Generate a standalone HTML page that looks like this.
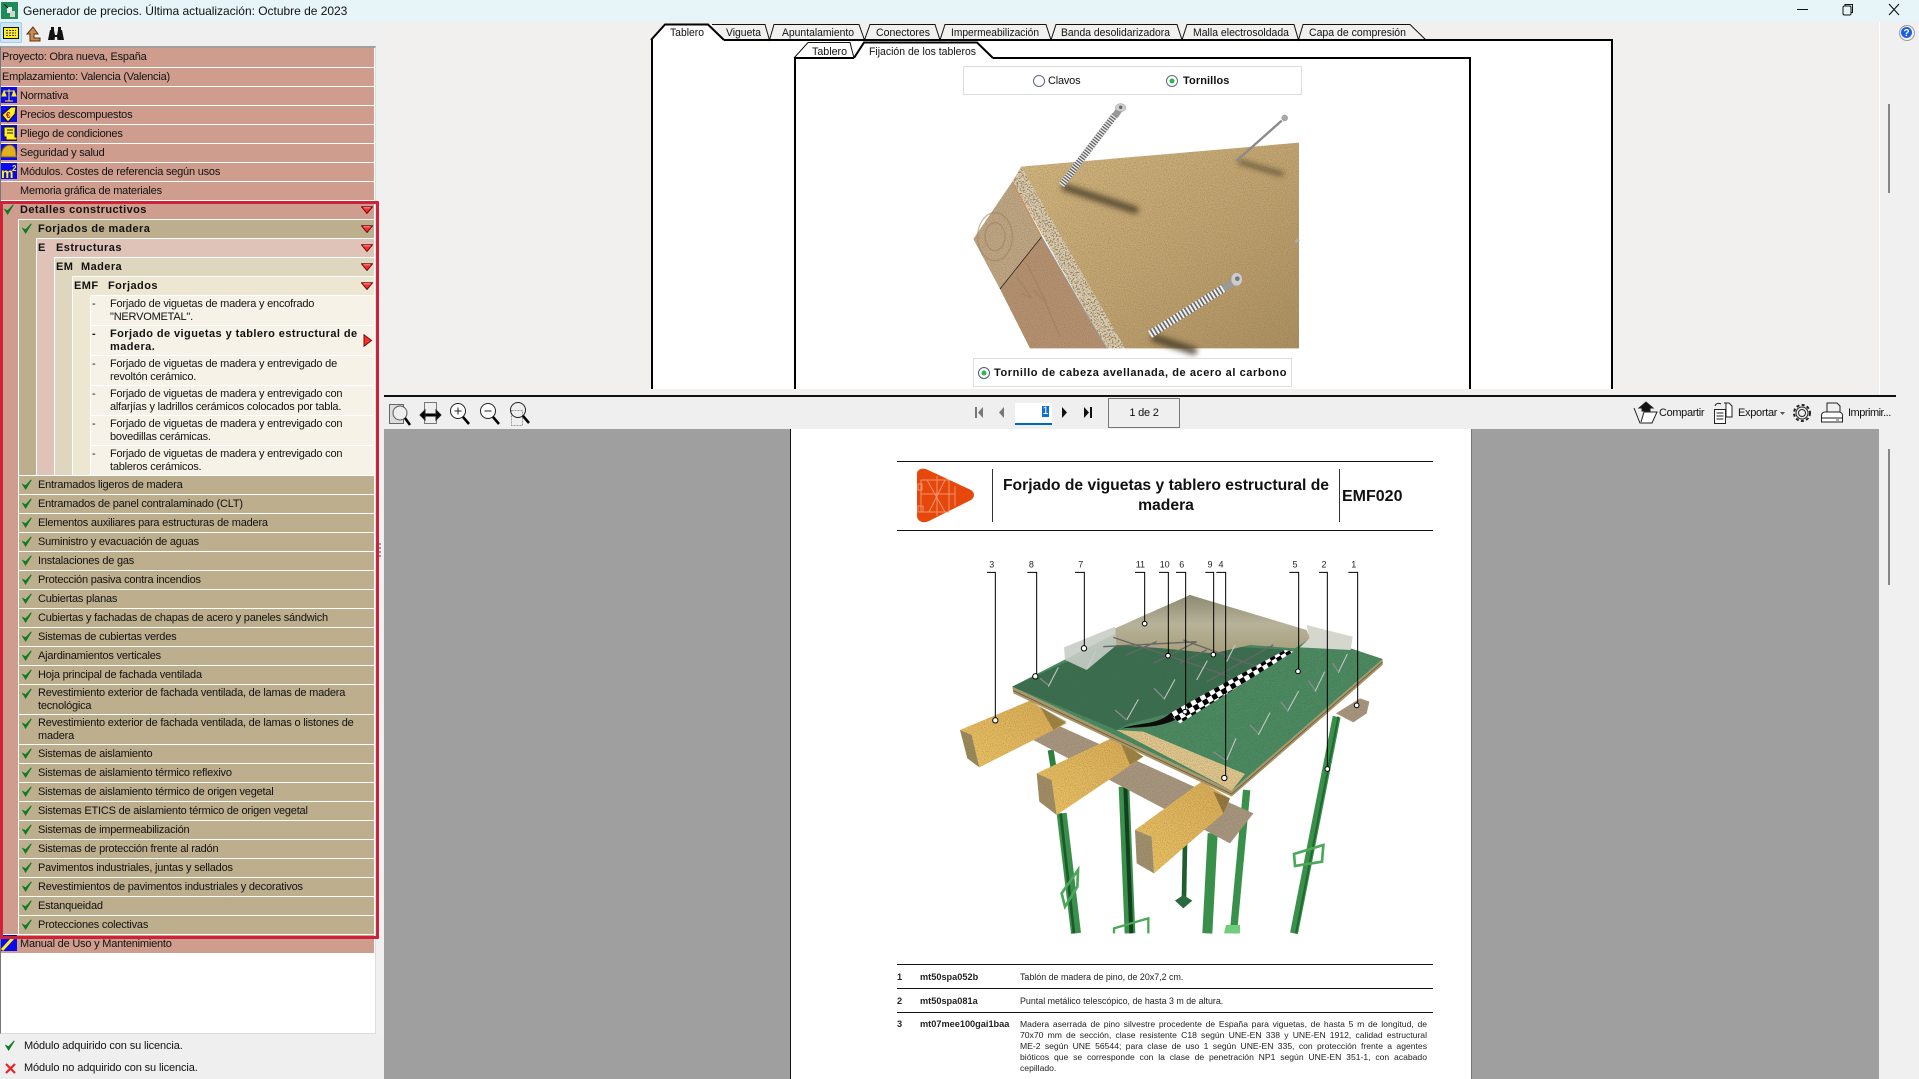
<!DOCTYPE html>
<html lang="es"><head><meta charset="utf-8"><title>Generador de precios</title>
<style>
html,body{margin:0;padding:0;background:#f0f0f0}
body{width:1919px;height:1079px;position:relative;overflow:hidden;font:11px/13px "Liberation Sans",sans-serif;color:#111;letter-spacing:-.21px}
div,svg,span{position:absolute;box-sizing:border-box}
.r{left:1px;width:373px;height:18px;line-height:18px;white-space:nowrap}
.p{background:#cf9d8d}.t{background:#bdae8d;left:19px;width:355px}
.b{font-weight:bold;letter-spacing:.43px}
.i{left:91px;width:283px;height:29px;background:#f6f2e7;white-space:normal}
.i span{left:19px;top:2px;width:256px;line-height:13px}
.i.b span{width:252px}
.i i{position:absolute;left:1px;top:2px;font-style:normal;line-height:13px}
.t span{left:19px;top:0;white-space:nowrap}
.t.two{height:29px}.t.two span{top:2px;line-height:13px;width:330px;white-space:normal}
.t svg{left:3px;top:3px}
.tx{font-family:"Liberation Sans",sans-serif;font-size:11px;fill:#111;letter-spacing:0}
.pd{font-size:8.9px;line-height:11px;color:#222;letter-spacing:0}
.pd.b{font-size:9.2px}
.ln{position:static;display:block;font-size:8.6px;height:11px;white-space:nowrap;text-align:justify;text-align-last:justify}
</style></head><body>
<svg width="0" height="0" style="position:absolute"><defs>
<symbol id="c" viewBox="0 0 10 11"><path d="M.8 5.500 3.600 10 9.300.8 3.700 6.800z" fill="#0b7d23" stroke="#0b7d23" stroke-width="1"/></symbol>
<symbol id="d" viewBox="0 0 12 8"><path d="M.5.8H11.500L6 7.500z" fill="#ff2a2a" stroke="#6b1010" stroke-width="1"/><path d="M2.500 1.800H9.500" stroke="#ff9a9a"/></symbol>
<filter id="g" x="0" y="0" width="100%" height="100%"><feTurbulence type="fractalNoise" baseFrequency=".35" numOctaves="2" seed="3"/><feColorMatrix values="0 0 0 0 .25 0 0 0 0 .18 0 0 0 0 .08 0 0 0 1.300 -.45"/><feComposite in2="SourceGraphic" operator="in" result="n"/><feMerge><feMergeNode in="SourceGraphic"/><feMergeNode in="n"/></feMerge></filter>
<filter id="sp" x="0" y="0" width="100%" height="100%"><feTurbulence type="fractalNoise" baseFrequency=".22" numOctaves="2" seed="5"/><feColorMatrix values="0 0 0 0 .3 0 0 0 0 .2 0 0 0 0 .1 0 0 0 6 -2.900"/><feComposite in2="SourceGraphic" operator="in" result="n"/><feMerge><feMergeNode in="SourceGraphic"/><feMergeNode in="n"/></feMerge></filter>
<filter id="f" x="0" y="0" width="100%" height="100%"><feTurbulence type="fractalNoise" baseFrequency=".8" numOctaves="2" seed="8"/><feColorMatrix values="0 0 0 0 .05 0 0 0 0 .12 0 0 0 0 .08 0 0 0 1.600 -.6"/><feComposite in2="SourceGraphic" operator="in" result="n"/><feMerge><feMergeNode in="SourceGraphic"/><feMergeNode in="n"/></feMerge></filter>
<filter id="bl" x="-30%" y="-60%" width="160%" height="220%"><feGaussianBlur stdDeviation="9"/></filter>
<linearGradient id="bd" x1="0" y1="0" x2="1" y2="1"><stop offset="0" stop-color="#d8bb84"/><stop offset=".55" stop-color="#c4a672"/><stop offset="1" stop-color="#ae9162"/></linearGradient>
<linearGradient id="sc" x1="0" y1="0" x2="1" y2="0"><stop offset="0" stop-color="#f0f0f0"/><stop offset="1" stop-color="#9a9a9a"/></linearGradient>
<linearGradient id="ins" x1="0" y1="0" x2="0" y2="1"><stop offset="0" stop-color="#8d8a72"/><stop offset=".5" stop-color="#b7b29a"/><stop offset="1" stop-color="#a79f7a"/></linearGradient>
<linearGradient id="jo" x1="0" y1="1" x2="1" y2="0"><stop offset="0" stop-color="#f4c965"/><stop offset="1" stop-color="#dcae55"/></linearGradient>
<pattern id="ck" width="32" height="32" patternUnits="userSpaceOnUse" patternTransform="rotate(-30)"><rect width="32" height="32" fill="#fff"/><rect width="16" height="16" fill="#000"/><rect x="16" y="16" width="16" height="16" fill="#000"/></pattern>
</defs></svg>

<!-- title bar -->
<div style="left:0;top:0;width:1919px;height:22px;background:#e7f5f9"></div>
<svg style="left:1px;top:2px" width="17" height="17"><rect width="17" height="17" fill="#1f8a5a"/><rect x="6" y="5" width="5" height="6" fill="#e8f0e8"/><rect x="9" y="9" width="5" height="6" fill="#cfd8d0"/><path d="M3 2 7 6" stroke="#111"/></svg>
<div style="left:23px;top:3px;font-size:12px;line-height:16px;white-space:nowrap;letter-spacing:-.02px">Generador de precios. Última actualización: Octubre de 2023</div>
<svg style="left:1797px;top:3px" width="110" height="14" fill="none" stroke="#111"><path d="M0 6.500H11"/><rect x="46" y="3" width="8" height="9" rx="1.500"/><path d="M48 3V1.500H55.500V9.500H54"/><path d="M92 1 102 12M102 1 92 12" stroke-width="1.100"/></svg>

<!-- top-left toolbar -->
<div style="left:0;top:22px;width:22px;height:21px;background:#cde6f7;border:1px solid #9fd0ee;border-radius:2px"></div>
<svg style="left:3px;top:26px" width="62" height="16"><rect x=".5" y="1.500" width="15" height="11" fill="#ffee22" stroke="#111"/><path d="M3 4.500H13M3 7H13M3 9.500H13" stroke="#333" stroke-dasharray="2 1"/><path d="M30 1 24 8H27V15H37V12H31V8H35z" fill="#c98b4e" stroke="#5a3315"/><path d="M45 14 47 4H51L52 9H54L55 4H59L61 14H54.500L54 11H52L51.500 14z" fill="#111"/><rect x="48" y="1" width="3" height="4" fill="#111"/><rect x="55" y="1" width="3" height="4" fill="#111"/></svg>

<!-- left panel -->
<div style="left:0;top:46px;width:376px;height:988px;background:#fff;border-top:2px solid #a0a0a0;border-left:1px solid #777;border-right:1px solid #ddd;border-bottom:1px solid #ddd"></div>
<div class="r p" style="top:48px;height:19px;padding-left:1px;line-height:19px">Proyecto: Obra nueva, España</div>
<div class="r p" style="top:68px"><span style="left:1px">Emplazamiento: Valencia (Valencia)</span></div>
<div class="r p" style="top:87px"><span style="left:19px">Normativa</span></div>
<div class="r p" style="top:106px"><span style="left:19px">Precios descompuestos</span></div>
<div class="r p" style="top:125px"><span style="left:19px">Pliego de condiciones</span></div>
<div class="r p" style="top:144px"><span style="left:19px">Seguridad y salud</span></div>
<div class="r p" style="top:163px"><span style="left:19px">Módulos. Costes de referencia según usos</span></div>
<div class="r p" style="top:182px"><span style="left:19px">Memoria gráfica de materiales</span></div>
<svg style="left:1px;top:87px" width="16" height="94">
<rect width="16" height="16" fill="#0a0af0"/><path d="M8 2V14M3 4H13M1 9 3 4 5 9zM11 9 13 4 15 9zM4 14H12" stroke="#ffee22" fill="#ffee22"/>
<rect y="19" width="16" height="16" fill="#0a0af0"/><path d="M1 28 10 20 15 20 14 27 7 35z" fill="#ffee22" stroke="#111"/><text x="5" y="31" font-size="8" font-weight="bold" fill="#c00" font-family="Liberation Sans">€</text>
<rect y="38" width="16" height="16" fill="#0a0af0"/><path d="M3 40H14V50H16V53H5V50H3z" fill="#ffee22" stroke="#111"/><path d="M6 43H12M6 46H12" stroke="#111"/>
<rect y="57" width="16" height="16" fill="#0a0af0"/><path d="M0 70C0 60 6 58 9 58 13 58 15 62 15 68L16 70z" fill="#e0b020" stroke="#7a5a10"/>
<rect y="76" width="16" height="16" fill="#0a0af0"/><text x="0" y="91" font-size="14" font-weight="bold" fill="#ffee22" font-family="Liberation Sans">m</text><text x="11" y="84" font-size="8" font-weight="bold" fill="#ffee22" font-family="Liberation Sans">2</text>
</svg>

<!-- nested columns -->
<div style="left:1px;top:201px;width:17px;height:733px;background:#cf9d8d"></div>
<div style="left:19px;top:220px;width:17px;height:255px;background:#bdae8d"></div>
<div style="left:37px;top:239px;width:17px;height:236px;background:#dfc3b9"></div>
<div style="left:55px;top:258px;width:17px;height:217px;background:#ded6bf"></div>
<div style="left:73px;top:277px;width:17px;height:198px;background:#ede6d1"></div>

<div class="r p b" style="top:201px"><svg style="left:3px;top:3px" width="10" height="11"><use href="#c"/></svg><span style="left:19px">Detalles constructivos</span></div>
<div class="r t b" style="top:220px;background:#bdae8d"><svg width="10" height="11"><use href="#c"/></svg><span>Forjados de madera</span></div>
<div class="r b" style="top:239px;left:37px;width:337px;background:#dfc3b9"><span style="left:1px">E</span><span style="left:19px">Estructuras</span></div>
<div class="r b" style="top:258px;left:55px;width:319px;background:#ded6bf"><span style="left:1px">EM</span><span style="left:26px">Madera</span></div>
<div class="r b" style="top:277px;left:73px;width:301px;background:#ede6d1"><span style="left:1px">EMF</span><span style="left:35px">Forjados</span></div>
<svg style="left:361px;top:206px" width="12" height="8"><use href="#d"/></svg>
<svg style="left:361px;top:225px" width="12" height="8"><use href="#d"/></svg>
<svg style="left:361px;top:244px" width="12" height="8"><use href="#d"/></svg>
<svg style="left:361px;top:263px" width="12" height="8"><use href="#d"/></svg>
<svg style="left:361px;top:282px" width="12" height="8"><use href="#d"/></svg>

<div class="r i" style="top:296px"><i>-</i><span>Forjado de viguetas de madera y encofrado "NERVOMETAL".</span></div>
<div class="r i b" style="top:326px"><i>-</i><span>Forjado de viguetas y tablero estructural de madera.</span></div>
<svg style="left:363px;top:334px" width="10" height="13"><path d="M1 .8 8.500 6.500 1 12.200z" fill="#ff2a2a" stroke="#6b1010"/></svg>
<div class="r i" style="top:356px"><i>-</i><span>Forjado de viguetas de madera y entrevigado de revoltón cerámico.</span></div>
<div class="r i" style="top:386px"><i>-</i><span>Forjado de viguetas de madera y entrevigado con alfarjías y ladrillos cerámicos colocados por tabla.</span></div>
<div class="r i" style="top:416px"><i>-</i><span>Forjado de viguetas de madera y entrevigado con bovedillas cerámicas.</span></div>
<div class="r i" style="top:446px"><i>-</i><span>Forjado de viguetas de madera y entrevigado con tableros cerámicos.</span></div>

<div class="r t" style="top:476px"><svg width="10" height="11"><use href="#c"/></svg><span>Entramados ligeros de madera</span></div>
<div class="r t" style="top:495px"><svg width="10" height="11"><use href="#c"/></svg><span>Entramados de panel contralaminado (CLT)</span></div>
<div class="r t" style="top:514px"><svg width="10" height="11"><use href="#c"/></svg><span>Elementos auxiliares para estructuras de madera</span></div>
<div class="r t" style="top:533px"><svg width="10" height="11"><use href="#c"/></svg><span>Suministro y evacuación de aguas</span></div>
<div class="r t" style="top:552px"><svg width="10" height="11"><use href="#c"/></svg><span>Instalaciones de gas</span></div>
<div class="r t" style="top:571px"><svg width="10" height="11"><use href="#c"/></svg><span>Protección pasiva contra incendios</span></div>
<div class="r t" style="top:590px"><svg width="10" height="11"><use href="#c"/></svg><span>Cubiertas planas</span></div>
<div class="r t" style="top:609px"><svg width="10" height="11"><use href="#c"/></svg><span>Cubiertas y fachadas de chapas de acero y paneles sándwich</span></div>
<div class="r t" style="top:628px"><svg width="10" height="11"><use href="#c"/></svg><span>Sistemas de cubiertas verdes</span></div>
<div class="r t" style="top:647px"><svg width="10" height="11"><use href="#c"/></svg><span>Ajardinamientos verticales</span></div>
<div class="r t" style="top:666px"><svg width="10" height="11"><use href="#c"/></svg><span>Hoja principal de fachada ventilada</span></div>
<div class="r t two" style="top:685px"><svg width="10" height="11"><use href="#c"/></svg><span>Revestimiento exterior de fachada ventilada, de lamas de madera tecnológica</span></div>
<div class="r t two" style="top:715px"><svg width="10" height="11"><use href="#c"/></svg><span>Revestimiento exterior de fachada ventilada, de lamas o listones de madera</span></div>
<div class="r t" style="top:745px"><svg width="10" height="11"><use href="#c"/></svg><span>Sistemas de aislamiento</span></div>
<div class="r t" style="top:764px"><svg width="10" height="11"><use href="#c"/></svg><span>Sistemas de aislamiento térmico reflexivo</span></div>
<div class="r t" style="top:783px"><svg width="10" height="11"><use href="#c"/></svg><span>Sistemas de aislamiento térmico de origen vegetal</span></div>
<div class="r t" style="top:802px"><svg width="10" height="11"><use href="#c"/></svg><span>Sistemas ETICS de aislamiento térmico de origen vegetal</span></div>
<div class="r t" style="top:821px"><svg width="10" height="11"><use href="#c"/></svg><span>Sistemas de impermeabilización</span></div>
<div class="r t" style="top:840px"><svg width="10" height="11"><use href="#c"/></svg><span>Sistemas de protección frente al radón</span></div>
<div class="r t" style="top:859px"><svg width="10" height="11"><use href="#c"/></svg><span>Pavimentos industriales, juntas y sellados</span></div>
<div class="r t" style="top:878px"><svg width="10" height="11"><use href="#c"/></svg><span>Revestimientos de pavimentos industriales y decorativos</span></div>
<div class="r t" style="top:897px"><svg width="10" height="11"><use href="#c"/></svg><span>Estanqueidad</span></div>
<div class="r t" style="top:916px"><svg width="10" height="11"><use href="#c"/></svg><span>Protecciones colectivas</span></div>
<div class="r p" style="top:935px"><span style="left:19px">Manual de Uso y Mantenimiento</span></div>
<svg style="left:1px;top:935px" width="16" height="16"><rect width="16" height="16" fill="#0a0af0"/><path d="M1 15 12 3" stroke="#ffee22" stroke-width="3"/><path d="M10 0 15 0 13 3" fill="#111"/></svg>

<!-- red highlight -->
<div style="left:0;top:201px;width:379px;height:738px;border:3px solid #cf2239;border-radius:1px"></div>
<div style="left:379px;top:543px;width:2px;height:14px;background:repeating-linear-gradient(#9a9a9a 0 2px,transparent 2px 4px)"></div>

<!-- legend -->
<div style="left:0;top:1034px;width:384px;height:45px;background:#efefef"></div>
<svg style="left:5px;top:1040px" width="10" height="11"><use href="#c"/></svg>
<svg style="left:5px;top:1063px" width="11" height="11"><path d="M1 1 10 10M10 1 1 10" stroke="#e8202a" stroke-width="2.200"/></svg>
<div style="left:24px;top:1040px;line-height:13px;white-space:nowrap;letter-spacing:-.12px">Módulo adquirido con su licencia.</div>
<div style="left:24px;top:1062px;line-height:13px;white-space:nowrap;letter-spacing:-.12px">Módulo no adquirido con su licencia.</div>

<!-- top detail pane -->
<div style="left:384px;top:22px;width:1495px;height:374px;background:#f1f0ef"></div>
<div style="left:1879px;top:22px;width:1px;height:374px;background:#fff"></div>
<div style="left:651px;top:40px;width:962px;height:349px;background:#fff"></div>
<svg style="left:640px;top:20px" width="990" height="40">
<path d="M72 4.500H125L129.500 20 134 4.500H219L224.500 20 230 4.500H295L300 20 305 4.500H406L411 20 416 4.500H537L542 20 547 4.500H654L658.500 20 663 4.500H770L786 20" fill="none" stroke="#111"/>
<path d="M11 20 25 4.500H68L84 20" fill="#fff" stroke="#000" stroke-width="2"/>
</svg>
<div style="left:651px;top:39px;width:2px;height:350px;background:#000"></div>
<div style="left:1611px;top:39px;width:2px;height:350px;background:#000"></div>
<div style="left:724px;top:39px;width:889px;height:2px;background:#000"></div>
<svg style="left:780px;top:38px" width="240" height="24" fill="none">
<path d="M14 20 28 4.500H70L74 20" fill="#fff" stroke="#111"/>
<path d="M74 20 84 4.500H197L213 20" fill="#fff" stroke="#000" stroke-width="2"/>
</svg>
<div style="left:794px;top:57px;width:2px;height:332px;background:#000"></div>
<div style="left:1469px;top:57px;width:2px;height:332px;background:#000"></div>
<div style="left:794px;top:57px;width:60px;height:2px;background:#000"></div>
<div style="left:993px;top:57px;width:478px;height:2px;background:#000"></div>
<svg style="left:640px;top:20px" width="800" height="40" class="tx">
<text class="tx" x="30" y="16" textLength="34" lengthAdjust="spacingAndGlyphs">Tablero</text>
<text class="tx" x="86" y="16" textLength="35" lengthAdjust="spacingAndGlyphs">Vigueta</text>
<text class="tx" x="142" y="16" textLength="72" lengthAdjust="spacingAndGlyphs">Apuntalamiento</text>
<text class="tx" x="236" y="16" textLength="54" lengthAdjust="spacingAndGlyphs">Conectores</text>
<text class="tx" x="311" y="16" textLength="88" lengthAdjust="spacingAndGlyphs">Impermeabilización</text>
<text class="tx" x="421" y="16" textLength="109" lengthAdjust="spacingAndGlyphs">Banda desolidarizadora</text>
<text class="tx" x="553" y="16" textLength="96" lengthAdjust="spacingAndGlyphs">Malla electrosoldada</text>
<text class="tx" x="669" y="16" textLength="97" lengthAdjust="spacingAndGlyphs">Capa de compresión</text>
<text class="tx" x="172" y="35" textLength="35" lengthAdjust="spacingAndGlyphs">Tablero</text>
<text class="tx" x="229" y="35" textLength="107" lengthAdjust="spacingAndGlyphs">Fijación de los tableros</text>
</svg>

<div style="left:963px;top:66px;width:339px;height:29px;border:1px solid #ddd;background:#fff"></div>
<svg style="left:1032px;top:74px" width="160" height="14"><circle cx="7" cy="7" r="5.500" fill="#fff" stroke="#5a6a80"/><circle cx="140" cy="7" r="5.500" fill="#fff" stroke="#5a6a80"/><circle cx="140" cy="7" r="2.500" fill="#2cb84a"/></svg>
<div style="left:1048px;top:74px;line-height:14px">Clavos</div>
<div class="b" style="left:1183px;top:74px;line-height:14px;letter-spacing:.1px">Tornillos</div>

<!-- panel photo -->
<svg style="left:950px;top:90px" width="380" height="310" viewBox="0 0 1140 930">
<polygon points="213,230 1047,158 1047,775 525,775" fill="url(#bd)" filter="url(#g)"/>
<polygon points="213,230 525,775 470,775 187,275" fill="#d8cbb0" filter="url(#sp)"/>
<polygon points="187,275 275,440 150,597 70,447" fill="#c2a988" filter="url(#g)"/>
<polygon points="150,597 275,440 470,775 240,775" fill="#b89373" filter="url(#g)"/>
<path d="M150 597 275 440" stroke="#111" stroke-width="2"/>
<path d="M187 275 275 440" stroke="#c98a55" stroke-width="3"/>
<path d="M275 440 470 775" stroke="#8a9aa0" stroke-width="2"/>
<g fill="none" stroke="#9c7a58" stroke-width="4" opacity=".5"><ellipse cx="135" cy="440" rx="30" ry="42"/><ellipse cx="135" cy="440" rx="52" ry="72"/><path d="M200 560 245 625 215 610M230 520 290 640 250 600M270 600 330 740"/></g>
<g filter="url(#bl)" fill="none" stroke="#4a3e2a" stroke-linecap="round" opacity=".85"><path d="M345 292 555 360" stroke-width="22"/><path d="M870 216 995 252" stroke-width="12"/><path d="M615 745 730 782" stroke-width="24"/></g>
<path d="M335 285 495 75" stroke="#666" stroke-width="20"/><path d="M335 285 495 75" stroke="#ededed" stroke-width="20" stroke-dasharray="4 4"/><path d="M495 78 512 53" stroke="#999" stroke-width="20"/><ellipse cx="512" cy="53" rx="16" ry="12" fill="#ccc" stroke="#777"/><circle cx="512" cy="52" r="5" fill="#666"/>
<path d="M860 212 995 92" stroke="#8a8a8a" stroke-width="7"/><circle cx="1004" cy="84" r="9" fill="#aaa" stroke="#777"/>
<path d="M600 733 825 592" stroke="#666" stroke-width="24"/><path d="M600 733 825 592" stroke="#f0f0f0" stroke-width="24" stroke-dasharray="6 5"/><path d="M820 595 860 572" stroke="#999" stroke-width="20"/><ellipse cx="860" cy="568" rx="17" ry="20" fill="#ccc" stroke="#888"/><circle cx="862" cy="566" r="7" fill="#777"/>
<path d="M1035 456 1047 448" stroke="#aaa" stroke-width="8"/>
</svg>
<div style="left:973px;top:358px;width:319px;height:29px;border:1px solid #ddd;background:#fff"></div>
<svg style="left:977px;top:366px" width="14" height="14"><circle cx="7" cy="7" r="5.500" fill="#fff" stroke="#4a5a70"/><circle cx="7" cy="7" r="2.500" fill="#2cb84a"/></svg>
<div class="b" style="left:994px;top:367px;line-height:13px;white-space:nowrap;letter-spacing:.57px">Tornillo de cabeza avellanada, de acero al carbono</div>

<!-- viewer toolbar -->
<div style="left:384px;top:395px;width:1512px;height:2px;background:#111"></div>
<div style="left:384px;top:397px;width:1495px;height:32px;background:#efefef"></div>
<svg style="left:388px;top:401px" width="150" height="26" fill="none" stroke="#222">
<rect x="1.500" y="3.500" width="14" height="19" fill="#ddd" stroke="#666"/><circle cx="12" cy="12" r="7" fill="#eee" stroke="#555"/><path d="M17 17 22 24" stroke="#000" stroke-width="2.500"/>
<rect x="36.500" y="1.500" width="12" height="21" fill="#eee" stroke="#777"/><path d="M36 14H49" stroke="#000" stroke-width="3"/><path d="M37 9 32 14 37 19zM48 9 53 14 48 19z" fill="#000"/>
<circle cx="70" cy="10" r="7.500" fill="#fff"/><path d="M66.500 10H73.500M70 6.500V13.500"/><path d="M75 16 81 23" stroke="#000" stroke-width="2.500"/>
<circle cx="100" cy="10" r="7.500" fill="#fff"/><path d="M96.500 10H103.500"/><path d="M105 16 111 23" stroke="#000" stroke-width="2.500"/>
<rect x="123.500" y="9.500" width="11" height="15" stroke="#999" stroke-dasharray="2 1"/><circle cx="130" cy="9" r="7.500"/><path d="M135 15 141 22" stroke="#000" stroke-width="2.500"/>
</svg>
<svg style="left:974px;top:406px" width="122" height="14">
<g fill="#777"><rect x="1" y="1" width="2" height="11"/><path d="M9 1 4 6.500 9 12z"/><path d="M30 1 25 6.500 30 12z"/></g>
<g fill="#111"><path d="M88 1 93 6.500 88 12z"/><path d="M110 1 115 6.500 110 12z"/><rect x="116" y="1" width="2" height="11"/></g>
</svg>
<div style="left:1015px;top:403px;width:37px;height:22px;background:#fff;border-bottom:2px solid #0067c0"></div>
<div style="left:1042px;top:406px;width:7px;height:11px;background:#0a6fd6;color:#fff;line-height:11px;text-align:center">1</div>
<div style="left:1108px;top:398px;width:72px;height:30px;border:1px solid #777;line-height:28px;text-align:center">1 de 2</div>
<svg style="left:1632px;top:400px" width="230" height="26" fill="none" stroke="#222">
<path d="M2 8 8 23H20L25 12H12L9 22" fill="#fff"/><path d="M10 11V8H7L14 2 21 8H18V11z" fill="#111"/>
<rect x="82.500" y="9.500" width="11" height="14" fill="#fff"/><path d="M84.500 13H91.500M84.500 16H91.500M84.500 19H91.500M83 6C84 3 87 3 89 4"/><path d="M92 3H97L100 6V17H94V3" fill="#fff"/>
<circle cx="170" cy="13" r="3.500"/><circle cx="170" cy="13" r="6"/><circle cx="170" cy="13" r="8" stroke-dasharray="3 2.300" stroke-width="2"/>
<path d="M195 12V3H205L208 6V12"/><path d="M189.500 15C190 13 191 12 193 12H207C209 12 210 13 210.500 15V22H189.500z" fill="#fff"/><path d="M189 18H210"/><path d="M204 20H207" stroke="#555"/>
</svg>
<svg style="left:1780px;top:412px" width="6" height="4"><path d="M0 0H5L2.500 3z" fill="#555"/></svg>
<div style="left:1659px;top:406px;line-height:14px;white-space:nowrap;letter-spacing:-.35px">Compartir</div>
<div style="left:1738px;top:406px;line-height:14px;white-space:nowrap;letter-spacing:-.3px">Exportar</div>
<div style="left:1848px;top:406px;line-height:14px;white-space:nowrap;letter-spacing:-.5px">Imprimir...</div>

<!-- right strip -->
<div style="left:1888px;top:104px;width:2px;height:89px;background:#868686"></div>
<div style="left:1888px;top:449px;width:2px;height:136px;background:#868686"></div>
<svg style="left:1899px;top:25px" width="16" height="16"><circle cx="8" cy="8" r="7.500" fill="#f4f4f4" stroke="#999"/><circle cx="7.500" cy="7.500" r="5.500" fill="#1e5fe0"/><text x="7.500" y="11" text-anchor="middle" font-size="10" font-weight="bold" fill="#fff" font-family="Liberation Sans">?</text></svg>

<!-- viewer -->
<div style="left:384px;top:429px;width:1495px;height:650px;background:#9f9f9f"></div>
<div style="left:790px;top:429px;width:682px;height:650px;background:#fff;border-left:1px solid #111;border-right:1px solid #777"></div>
<div style="left:897px;top:461px;width:536px;height:1px;background:#111"></div>
<div style="left:897px;top:530px;width:536px;height:1px;background:#111"></div>
<div style="left:992px;top:469px;width:1px;height:53px;background:#333"></div>
<div style="left:1339px;top:469px;width:1px;height:53px;background:#333"></div>
<svg style="left:915px;top:466px" width="62" height="60"><path d="M2 8C2 3 8 1 13 4L56 24C60 27 60 31 56 34L14 55C8 58 2 55 2 50z" fill="#e6480b"/><g stroke="#f6a584" fill="none" opacity=".8"><rect x="6" y="14" width="28" height="32"/><path d="M22 10V50M6 28H40M12 14 30 46M30 14 14 46M40 20V40"/><rect x="3" y="18" width="4" height="6"/><rect x="3" y="40" width="5" height="6"/></g></svg>
<div class="b" style="left:993px;top:476px;width:346px;text-align:center;font-size:15.700px;line-height:19.500px;color:#111;letter-spacing:0">Forjado de viguetas y tablero estructural de<br>madera</div>
<div class="b" style="left:1342px;top:488px;font-size:16px;line-height:17px;letter-spacing:0">EMF020</div>

<!-- axonometric drawing -->
<svg style="left:930px;top:550px" width="480" height="400" viewBox="0 0 1440 1200">
<g fill="none" stroke-linecap="butt">
<path d="M362 600 378 700" stroke="#2f8040" stroke-width="18"/>
<path d="M395 790 438 1150" stroke="#3a8f4a" stroke-width="30"/><path d="M392 790 432 1150" stroke="#1a5a2c" stroke-width="8"/>
<path d="M582 710 600 1150" stroke="#3a8f4a" stroke-width="32"/><path d="M586 710 604 1150" stroke="#123f1e" stroke-width="12"/>
<path d="M765 880 762 1040" stroke="#1e5f30" stroke-width="14"/>
<path d="M848 850 832 1150" stroke="#3a8f4a" stroke-width="30"/>
<path d="M950 720 910 1150" stroke="#3a8f4a" stroke-width="22"/>
<path d="M1220 500 1092 1150" stroke="#3a8f4a" stroke-width="24"/><path d="M1225 500 1098 1150" stroke="#1f6a32" stroke-width="6"/>
<path d="M1092 912 1180 885 1176 935 1095 948z" stroke="#4ca75a" stroke-width="8"/>
<path d="M395 1030 444 960 442 1010 405 1070z" stroke="#4ca75a" stroke-width="8"/>
<path d="M552 1150V1135L655 1105V1150" stroke="#4ca75a" stroke-width="7"/>
</g>
<path d="M735 1052 760 1035 787 1052 760 1075z" fill="#2a6a3c"/>
<path d="M882 1150 888 1125 930 1125 930 1150z" fill="#6fce7c"/>
<polygon points="310,570 370,520 970,790 900,880" fill="#a99883" filter="url(#g)"/>
<polygon points="1218,490 1290,445 1318,455 1310,490 1270,517" fill="#a99883" filter="url(#g)"/>
<polygon points="90,540 300,452 410,520 148,652 125,555" fill="url(#jo)" filter="url(#g)"/>
<polygon points="90,540 125,555 148,652 112,625" fill="#998a5c" filter="url(#g)"/>
<polygon points="320,670 555,560 640,620 380,795 365,690" fill="url(#jo)" filter="url(#g)"/>
<polygon points="320,670 365,690 380,795 328,755" fill="#a08e66" filter="url(#g)"/>
<polygon points="615,840 815,695 900,745 880,790 672,970 665,860" fill="url(#jo)" filter="url(#g)"/>
<polygon points="615,840 665,860 672,970 620,940" fill="#a09270" filter="url(#g)"/>
<polygon points="330,470 410,515 370,540" fill="#6c5d30" opacity=".55"/>
<polygon points="570,575 640,620 600,645" fill="#6c5d30" opacity=".55"/>
<polygon points="850,725 900,745 880,790" fill="#5a4a28" opacity=".55"/>
<polygon points="247,410 905,722 1358,327 1358,345 905,740 250,430" fill="#a8966a"/>
<path d="M250 422 905 732 1358 336" fill="none" stroke="#5c5030" stroke-width="2"/>
<polygon points="247,410 780,135 1358,327 905,722" fill="#4d8e62" filter="url(#f)"/>
<polygon points="247,410 555,270 1085,300 760,490 720,490 600,520 560,540" fill="#3a7050" filter="url(#f)"/>
<polygon points="560,540 640,545 945,672 905,722" fill="#e6cc92" filter="url(#g)"/>
<path d="M575 535C640 515 680 525 720 490L735 510C680 535 630 530 575 535z" fill="#0c0c0c"/>
<polygon points="718,490 1065,300 1090,305 750,520" fill="url(#ck)"/>
<polygon points="555,235 780,135 1130,240 1140,265 1095,295 960,285 850,310 700,295 560,285" fill="url(#ins)"/>
<polygon points="402,292 555,230 560,285 470,360 405,330" fill="#c9cdc6" opacity=".9"/>
<polygon points="1130,225 1268,260 1262,300 1110,292 1138,265" fill="#d5d6ce"/>
<g stroke="#666" stroke-width="4" fill="none"><path d="M520 290 800 275M590 315 680 275M670 340 800 275M550 262 900 380M750 340 830 300M830 395 1030 285M760 270 980 350"/></g>
<g stroke="#ccc" stroke-width="3" fill="none"><path d="M355 410 385 352M470 358 497 305M590 510 625 448M702 448 735 388M800 390 832 332M890 335 915 285M890 630 918 565M985 555 1020 488M1072 485 1106 423M1155 425 1184 365M1225 368 1252 312"/></g>
<g stroke="#8a8a8a" stroke-width="4" fill="none"><path d="M330 385 355 405M555 480 590 510M672 415 702 445M850 605 885 630M960 525 985 550M1052 455 1075 485M1135 392 1155 420M1208 340 1225 365"/></g>
<g fill="none" stroke="#000" stroke-width="3">
<path d="M171 67H196V511M292 67H320V379M435 67H463V295M615 67H644V221M687 67H715V317M738 67H767V485M826 67H851V314M859 67H887V684M1078 67H1106V364M1167 67H1192V657M1255 67H1283V466"/>
</g>
<g fill="#fff" stroke="#000" stroke-width="3">
<circle cx="196" cy="511" r="8"/><circle cx="316" cy="379" r="8"/><circle cx="462" cy="295" r="8"/><circle cx="644" cy="221" r="7"/><circle cx="714" cy="317" r="7"/><circle cx="765" cy="485" r="7"/><circle cx="850" cy="314" r="7"/><circle cx="883" cy="684" r="8"/><circle cx="1104" cy="364" r="7"/><circle cx="1192" cy="657" r="7"/><circle cx="1280" cy="466" r="7"/>
</g>
<g font-family="Liberation Sans" font-size="27" fill="#222" text-anchor="middle">
<text x="185" y="53">3</text><text x="304" y="53">8</text><text x="452" y="53">7</text><text x="631" y="53">11</text><text x="704" y="53">10</text><text x="755" y="53">6</text><text x="840" y="53">9</text><text x="873" y="53">4</text><text x="1095" y="53">5</text><text x="1182" y="53">2</text><text x="1271" y="53">1</text>
</g>
</svg>

<!-- material table -->
<div style="left:897px;top:964px;width:536px;height:1px;background:#111"></div>
<div style="left:897px;top:988px;width:536px;height:1px;background:#111"></div>
<div style="left:897px;top:1012px;width:536px;height:1px;background:#111"></div>
<div class="pd b" style="left:897px;top:972px">1</div><div class="pd b" style="left:920px;top:972px">mt50spa052b</div>
<div class="pd" style="left:1020px;top:972px;white-space:nowrap">Tablón de madera de pino, de 20x7,2 cm.</div>
<div class="pd b" style="left:897px;top:996px">2</div><div class="pd b" style="left:920px;top:996px">mt50spa081a</div>
<div class="pd" style="left:1020px;top:996px;white-space:nowrap">Puntal metálico telescópico, de hasta 3 m de altura.</div>
<div class="pd b" style="left:897px;top:1019px">3</div><div class="pd b" style="left:920px;top:1019px">mt07mee100gai1baa</div>
<div class="pd" style="left:1020px;top:1019px;width:407px">
<span class="ln">Madera aserrada de pino silvestre procedente de España para viguetas, de hasta 5 m de longitud, de</span>
<span class="ln">70x70 mm de sección, clase resistente C18 según UNE-EN 338 y UNE-EN 1912, calidad estructural</span>
<span class="ln">ME-2 según UNE 56544; para clase de uso 1 según UNE-EN 335, con protección frente a agentes</span>
<span class="ln">bióticos que se corresponde con la clase de penetración NP1 según UNE-EN 351-1, con acabado</span>
<span class="ln" style="text-align-last:left">cepillado.</span>
</div>
</body></html>
